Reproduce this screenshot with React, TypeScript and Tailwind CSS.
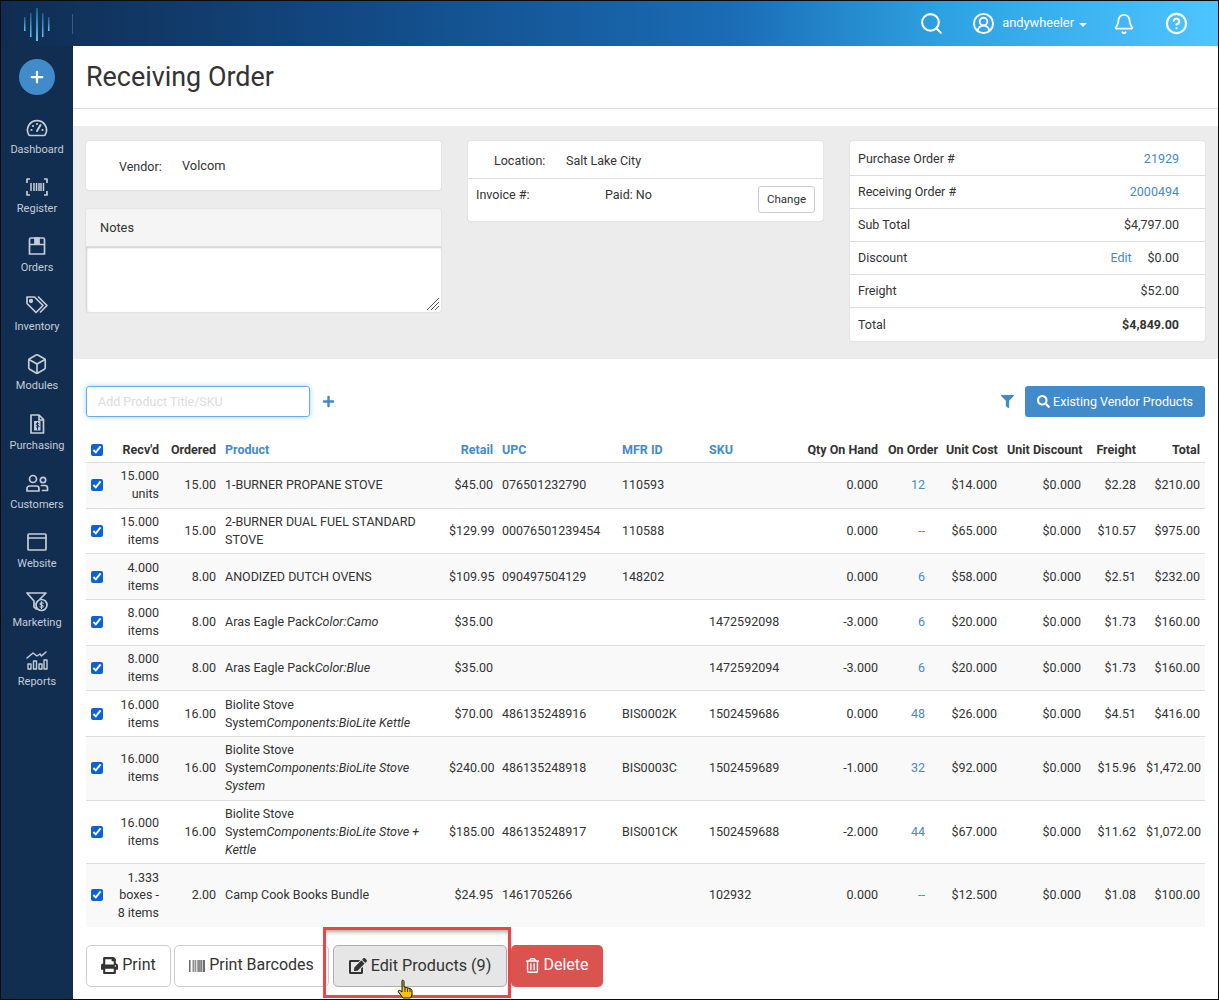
import React from 'react';
import { FaPrint, FaBarcode, FaEdit, FaRegTrashAlt, FaSearch, FaFilter, FaPlus } from 'react-icons/fa';
import { Search, CircleUserRound, Bell, CircleHelp, Box, Plus } from 'lucide-react';

const blue = 'text-[#428bca]';

type Row = {
  recvd: string[];
  ordered: string;
  product: React.ReactNode;
  retail: string;
  upc?: string;
  mfr?: string;
  sku?: string;
  qty: string;
  onOrder: string;
  cost: string;
  freight: string;
  total: string;
};

const rows: Row[] = [
  { recvd: ['15.000', 'units'], ordered: '15.00', product: '1-BURNER PROPANE STOVE', retail: '$45.00', upc: '076501232790', mfr: '110593', qty: '0.000', onOrder: '12', cost: '$14.000', freight: '$2.28', total: '$210.00' },
  { recvd: ['15.000', 'items'], ordered: '15.00', product: '2-BURNER DUAL FUEL STANDARD STOVE', retail: '$129.99', upc: '00076501239454', mfr: '110588', qty: '0.000', onOrder: '--', cost: '$65.000', freight: '$10.57', total: '$975.00' },
  { recvd: ['4.000', 'items'], ordered: '8.00', product: 'ANODIZED DUTCH OVENS', retail: '$109.95', upc: '090497504129', mfr: '148202', qty: '0.000', onOrder: '6', cost: '$58.000', freight: '$2.51', total: '$232.00' },
  { recvd: ['8.000', 'items'], ordered: '8.00', product: <>Aras Eagle Pack<i>Color:Camo</i></>, retail: '$35.00', sku: '1472592098', qty: '-3.000', onOrder: '6', cost: '$20.000', freight: '$1.73', total: '$160.00' },
  { recvd: ['8.000', 'items'], ordered: '8.00', product: <>Aras Eagle Pack<i>Color:Blue</i></>, retail: '$35.00', sku: '1472592094', qty: '-3.000', onOrder: '6', cost: '$20.000', freight: '$1.73', total: '$160.00' },
  { recvd: ['16.000', 'items'], ordered: '16.00', product: <>Biolite Stove System<i>Components:BioLite Kettle</i></>, retail: '$70.00', upc: '486135248916', mfr: 'BIS0002K', sku: '1502459686', qty: '0.000', onOrder: '48', cost: '$26.000', freight: '$4.51', total: '$416.00' },
  { recvd: ['16.000', 'items'], ordered: '16.00', product: <>Biolite Stove System<i>Components:BioLite Stove System</i></>, retail: '$240.00', upc: '486135248918', mfr: 'BIS0003C', sku: '1502459689', qty: '-1.000', onOrder: '32', cost: '$92.000', freight: '$15.96', total: '$1,472.00' },
  { recvd: ['16.000', 'items'], ordered: '16.00', product: <>Biolite Stove System<i>Components:BioLite Stove + Kettle</i></>, retail: '$185.00', upc: '486135248917', mfr: 'BIS001CK', sku: '1502459688', qty: '-2.000', onOrder: '44', cost: '$67.000', freight: '$11.62', total: '$1,072.00' },
  { recvd: ['1.333', 'boxes -', '8 items'], ordered: '2.00', product: 'Camp Cook Books Bundle', retail: '$24.95', upc: '1461705266', sku: '102932', qty: '0.000', onOrder: '--', cost: '$12.500', freight: '$1.08', total: '$100.00' },
];

const Ico = ({ children }: { children: React.ReactNode }) => (
  <svg width="24" height="24" viewBox="0 0 24 24" fill="none" stroke="currentColor" strokeWidth="1.7" strokeLinecap="round" strokeLinejoin="round">
    {children}
  </svg>
);

const nav: { label: string; icon: React.ReactNode }[] = [
  {
    label: 'Dashboard',
    icon: (
      <Ico>
        <path d="M5 19.500h14a1.500 1.500 0 0 0 1.300-.8A9.500 9.500 0 1 0 3.700 18.700a1.500 1.500 0 0 0 1.300.8z" />
        <path d="M12 15l3.500-6" strokeWidth="2" />
        <path d="M6.500 14h.01M8 10h.01M12 8h.01M17.500 14h.01" strokeWidth="2.200" />
      </Ico>
    ),
  },
  {
    label: 'Register',
    icon: (
      <Ico>
        <path d="M2 8V4h3M22 8V4h-3M2 16v4h3M22 16v4h-3" strokeLinecap="butt" />
        <path d="M6 8v8M9 8v8M11.500 8v8M14 8v8M16 8v8M18.500 8v8" strokeWidth="1.500" strokeLinecap="butt" />
      </Ico>
    ),
  },
  {
    label: 'Orders',
    icon: (
      <Ico>
        <path d="M6 4h12a1.500 1.500 0 0 1 1.500 1.500V20h-15V5.500A1.500 1.500 0 0 1 6 4zM4.500 10.500h15" />
        <path d="M10 4h4v6h-4z" fill="currentColor" />
      </Ico>
    ),
  },
  {
    label: 'Inventory',
    icon: (
      <Ico>
        <path d="M2 4v6.500l9 9 7-7-8.500-8.500z" />
        <path d="M13.500 4l8.500 8.500-6.500 6.500" />
        <circle cx="6" cy="8" r="1.300" fill="currentColor" />
      </Ico>
    ),
  },
  { label: 'Modules', icon: <Box size={22} strokeWidth={1.800} /> },
  {
    label: 'Purchasing',
    icon: (
      <Ico>
        <path d="M6 3h8l4.500 4.500V21H6zM14 3v5h4.500" />
        <rect x="9" y="9" width="6.500" height="9.500" fill="currentColor" stroke="none" />
        <path d="M14 11.700c-.5-.6-2.800-.7-2.800.6s2.800.7 2.800 2-2.400 1.200-2.900.5M12.500 10.500v7" stroke="#112d50" strokeWidth="1" />
      </Ico>
    ),
  },
  {
    label: 'Customers',
    icon: (
      <Ico>
        <circle cx="8" cy="8" r="3.500" />
        <path d="M2 20v-2.500A2.500 2.500 0 0 1 4.500 15h7a2.500 2.500 0 0 1 2.500 2.500V20z" />
        <circle cx="18" cy="9" r="2.700" />
        <path d="M16.500 14.500H20a2.500 2.500 0 0 1 2.500 2.500v2.500h-5" />
      </Ico>
    ),
  },
  {
    label: 'Website',
    icon: (
      <Ico>
        <rect x="3" y="4" width="18" height="16" rx="1" />
        <path d="M3 8h18" />
      </Ico>
    ),
  },
  {
    label: 'Marketing',
    icon: (
      <Ico>
        <path d="M2 4h19l-6 6M2 4l7 8v6l2.500 2" />
        <circle cx="16.500" cy="16" r="5.500" />
        <path d="M18.200 14.300c-.5-.8-3.200-.8-3.200.7s3.200.8 3.200 2.200-2.700 1.400-3.200.6M16.500 12.500v7" strokeWidth="1.100" />
      </Ico>
    ),
  },
  {
    label: 'Reports',
    icon: (
      <Ico>
        <path d="M2 10l6-5 4 3 3-2 1.500 2L21 4" strokeWidth="1.500" />
        <path d="M3 16h3v5H3zM8.500 13h3v8h-3zM14 16h3v5h-3zM19 12h3v9h-3z" strokeWidth="1.400" />
      </Ico>
    ),
  },
];

const Th = ({ children, right, link, className = '' }: { children?: React.ReactNode; right?: boolean; link?: boolean; className?: string }) => (
  <th className={`pb-[3px] pt-[5px] align-bottom font-bold ${right ? 'px-[5px] text-right' : 'pl-[4px] pr-[5px] text-left'} ${link ? blue : ''} ${className}`}>{children}</th>
);

const Logo = () => (
  <svg width="26" height="34" viewBox="0 0 26 34">
    <defs>
      <linearGradient id="bar" x1="0" y1="0" x2="0" y2="1">
        <stop offset="0" stopColor="#1d5f99" />
        <stop offset="1" stopColor="#5cc8f5" />
      </linearGradient>
    </defs>
    <rect x="0" y="10" width="1.500" height="14" fill="url(#bar)" />
    <rect x="6" y="6" width="1.500" height="24" fill="url(#bar)" />
    <rect x="12" y="1" width="2" height="33" fill="url(#bar)" />
    <rect x="18" y="6" width="1.500" height="24" fill="url(#bar)" />
    <rect x="24" y="10" width="1.500" height="14" fill="url(#bar)" />
  </svg>
);

const Hand = () => (
  <svg width="18" height="20" viewBox="0 0 18 20" className="absolute left-[71px] top-[49px]">
    <path d="M5 1.500c1-.8 2 0 2 1V8l6 1.500c1.500.5 2 1.500 2 2.500v4l-1.500 3H6L1.500 13c-.8-1 .5-2.200 1.500-1.500L5 13z" fill="#f5c211" stroke="#111" strokeWidth="1" />
    <path d="M8 9v4M10.500 9.500V13M13 10v3" stroke="#111" strokeWidth="0.800" />
  </svg>
);

export default function App() {
  return (
    <div className="box-border flex h-[1000px] w-[1219px] flex-col overflow-hidden border border-[#0b0b0b] bg-white font-['Roboto',sans-serif] text-[12.5px] leading-[1.42857] text-[#333]">
      {/* top bar */}
      <header className="flex h-[45px] shrink-0 items-center bg-[linear-gradient(90deg,#102c50_0%,#124a85_30%,#1a6cb5_60%,#2ea3e3_78%,#4dc5ff_100%)] text-white">
        <div className="flex h-[20px] w-[72px] items-center justify-center border-r border-[#3a5b80]">
          <Logo />
        </div>
        <div className="ml-auto flex items-center">
          <Search size={25} strokeWidth={2} className="mr-[28px]" />
          <CircleUserRound size={23} strokeWidth={2} className="mr-[7px]" />
          <span className="text-[12.800px]">andywheeler</span>
          <span className="ml-[5px] mt-[2px] h-0 w-0 border-x-[4px] border-t-[4px] border-x-transparent border-t-white" />
          <Bell size={22} strokeWidth={2} className="ml-[26px]" />
          <CircleHelp size={23} strokeWidth={2.200} className="ml-[30px] mr-[30px]" />
        </div>
      </header>

      <div className="flex min-h-0 flex-1">
        {/* sidebar */}
        <aside className="flex w-[72px] shrink-0 flex-col items-center bg-[#112d50] text-[#c5ced8]">
          <button className="mb-[12px] mt-[13px] flex h-[36px] w-[36px] items-center justify-center rounded-full bg-[#428bca] text-white">
            <Plus size={18} strokeWidth={3} />
          </button>
          {nav.map((n) => (
            <div key={n.label} className="flex h-[59.200px] w-full flex-col items-center justify-center text-[11px]">
              <span className="flex h-[24px] items-center">{n.icon}</span>
              <span className="mt-[1px] leading-[17px]">{n.label}</span>
            </div>
          ))}
        </aside>

        {/* main */}
        <main className="relative min-w-0 flex-1">
          <div className="h-[63px] border-b border-[#ddd] px-[13px] pt-[13px] text-[26.900px] leading-[36px] text-[#333]">Receiving Order</div>
          <div className="mt-[17px] grid h-[233px] grid-cols-3 items-start gap-x-[27px] bg-[#ececec] px-[13px] pt-[15px]">
            <div>
              <div className="flex h-[49px] items-center rounded-[3px] bg-white pl-[33px] pt-[2px] shadow-[0_0_0_1px_#e4e4e4,0_1px_1px_#ccc]">
                <span className="w-[63px]">Vendor:</span>
                <span className="text-[12.800px]">Volcom</span>
              </div>
              <div className="mt-[19px] rounded-[3px] bg-white shadow-[0_0_0_1px_#e4e4e4,0_1px_1px_#ccc]">
                <div className="flex h-[38px] items-center rounded-t-[3px] border-b border-[#ddd] bg-[#f5f5f5] pl-[14px] pt-[2px] text-[12.800px]">Notes</div>
                <div className="relative h-[65px] rounded-b-[3px] shadow-[inset_1px_1px_2px_#ccc]">
                  <svg width="14" height="14" viewBox="0 0 14 14" className="absolute bottom-[1px] right-[1px]" stroke="#555">
                    <path d="M13 1L1 13M13 5L5 13M13 9L9 13" />
                  </svg>
                </div>
              </div>
            </div>
            <div className="rounded-[3px] bg-white shadow-[0_0_0_1px_#e4e4e4,0_1px_1px_#ccc]">
              <div className="flex h-[38px] items-center border-b border-[#ddd] pl-[26px] pt-[3px]">
                <span className="w-[72px]">Location:</span>
                <span>Salt Lake City</span>
              </div>
              <div className="flex h-[42px] items-start pl-[8px] pr-[8px] pt-[7px]">
                <span className="w-[129px]">Invoice #:</span>
                <span>Paid: No</span>
                <button className="ml-auto h-[27px] w-[57px] rounded-[3px] border border-[#ccc] bg-white text-[11.500px]">Change</button>
              </div>
            </div>
            <div className="rounded-[3px] bg-white pt-[2px] shadow-[0_0_0_1px_#e4e4e4,0_1px_1px_#ccc]">
              {[
                ['Purchase Order #', '21929', true],
                ['Receiving Order #', '2000494', true],
                ['Sub Total', '$4,797.00', false],
                ['Discount', '$0.00', false],
                ['Freight', '$52.00', false],
              ].map(([k, v, link]) => (
                <div key={k as string} className="flex h-[33px] items-center border-b border-[#ddd] pl-[8px] pr-[26px]">
                  <span>{k}</span>
                  {k === 'Discount' && <span className={`ml-auto mr-[16px] ${blue}`}>Edit</span>}
                  <span className={`${k === 'Discount' ? '' : 'ml-auto'} ${link ? blue : ''}`}>{v}</span>
                </div>
              ))}
              <div className="flex h-[33px] items-center pl-[8px] pr-[26px]">
                <span>Total</span>
                <b className="ml-auto">$4,849.00</b>
              </div>
            </div>
          </div>

          <div className="flex items-center px-[13px] pt-[27px]">
            <input
              placeholder="Add Product Title/SKU"
              className="h-[31px] w-[224px] rounded-[3px] border border-[#66afe9] px-[11px] text-[12.500px] shadow-[0_0_5px_rgba(102,175,233,0.6)] outline-none placeholder:text-[#dcdcdc]"
            />
            <FaPlus size={13} className={`ml-[12px] ${blue}`} />
            <FaFilter size={13} className={`ml-auto mr-[11px] ${blue}`} />
            <button className="flex h-[31px] w-[180px] items-center justify-center gap-[3px] rounded-[3px] bg-[#428bca] text-[12.500px] text-white">
              <FaSearch size={13} />
              Existing Vendor Products
            </button>
          </div>

          <div className="px-[13px] pt-[19px]">
            <table className="w-[1119px] table-fixed border-collapse">
              <colgroup>
                {[26, 52, 57, 223, 54, 120, 87, 78, 100, 58, 61, 84, 55, 64].map((w, i) => (
                  <col key={i} style={{ width: w }} />
                ))}
              </colgroup>
              <thead>
                <tr className="border-b border-[#ddd]">
                  <th className="pb-[3px] pl-[5px] pr-[5px] pt-[5px] text-left align-middle">
                    <input type="checkbox" defaultChecked className="m-0 block h-[12px] w-[12px] accent-[#0b62d8]" />
                  </th>
                  <Th right>Recv'd</Th>
                  <Th right>Ordered</Th>
                  <Th link>Product</Th>
                  <Th right link>Retail</Th>
                  <Th link>UPC</Th>
                  <Th link>MFR ID</Th>
                  <Th link>SKU</Th>
                  <Th right>Qty On Hand</Th>
                  <Th right className="whitespace-nowrap">On Order</Th>
                  <Th right className="whitespace-nowrap">Unit Cost</Th>
                  <Th right className="whitespace-nowrap">Unit Discount</Th>
                  <Th right>Freight</Th>
                  <Th right>Total</Th>
                </tr>
              </thead>
              <tbody>
                {rows.map((r, i) => (
                  <tr key={i} className={`border-t border-[#ddd] first:border-t-0 ${i % 2 === 0 ? 'bg-[#f9f9f9]' : ''}`}>
                    <td className="px-[5px] py-[4.500px] align-middle">
                      <input type="checkbox" defaultChecked className="m-0 block h-[12px] w-[12px] accent-[#0b62d8]" />
                    </td>
                    <td className="px-[5px] py-[4.500px] text-right">
                      {r.recvd.map((l) => (
                        <div key={l}>{l}</div>
                      ))}
                    </td>
                    <td className="px-[5px] py-[4.500px] text-right">{r.ordered}</td>
                    <td className="py-[4.500px] pl-[4px] pr-[5px]">{r.product}</td>
                    <td className="px-[5px] py-[4.500px] text-right">{r.retail}</td>
                    <td className="py-[4.500px] pl-[4px] pr-[5px]">{r.upc}</td>
                    <td className="py-[4.500px] pl-[4px] pr-[5px]">{r.mfr}</td>
                    <td className="py-[4.500px] pl-[4px] pr-[5px]">{r.sku}</td>
                    <td className="px-[5px] py-[4.500px] text-right">{r.qty}</td>
                    <td className={`py-[4.500px] pl-[5px] pr-[16px] text-right ${blue}`}>{r.onOrder}</td>
                    <td className="px-[5px] py-[4.500px] text-right">{r.cost}</td>
                    <td className="px-[5px] py-[4.500px] text-right">$0.000</td>
                    <td className="px-[5px] py-[4.500px] text-right">{r.freight}</td>
                    <td className="px-[5px] py-[4.500px] text-right">{r.total}</td>
                  </tr>
                ))}
              </tbody>
            </table>
          </div>

          <div className="flex gap-[3px] px-[13px] pt-[18px] text-[16px]">
            <button className="flex h-[42px] w-[85px] items-center justify-center gap-[4px] rounded-[5px] border border-[#ccc] bg-white">
              <FaPrint size={17} />
              Print
            </button>
            <button className="flex h-[42px] w-[155px] items-center justify-center gap-[4px] rounded-[5px] border border-[#ccc] bg-white">
              <FaBarcode size={16} />
              Print Barcodes
            </button>
            <button className="ml-[1px] flex h-[42px] w-[174px] items-center justify-center gap-[4px] rounded-[5px] border border-[#adadad] bg-[#e6e6e6] text-[16.200px]">
              <FaEdit size={18} />
              Edit Products (9)
            </button>
            <button className="ml-[1px] flex h-[42px] w-[92px] items-center justify-center gap-[3px] rounded-[5px] bg-[#d9534f] text-white">
              <FaRegTrashAlt size={15} />
              Delete
            </button>
          </div>

          {/* red annotation around the edit button */}
          <div className="absolute left-[250px] top-[881px] h-[71px] w-[188px] border-[3px] border-[#f04444] shadow-[inset_0_4px_4px_-2px_rgba(0,0,0,0.35)]">
            <Hand />
          </div>
        </main>
      </div>
    </div>
  );
}
